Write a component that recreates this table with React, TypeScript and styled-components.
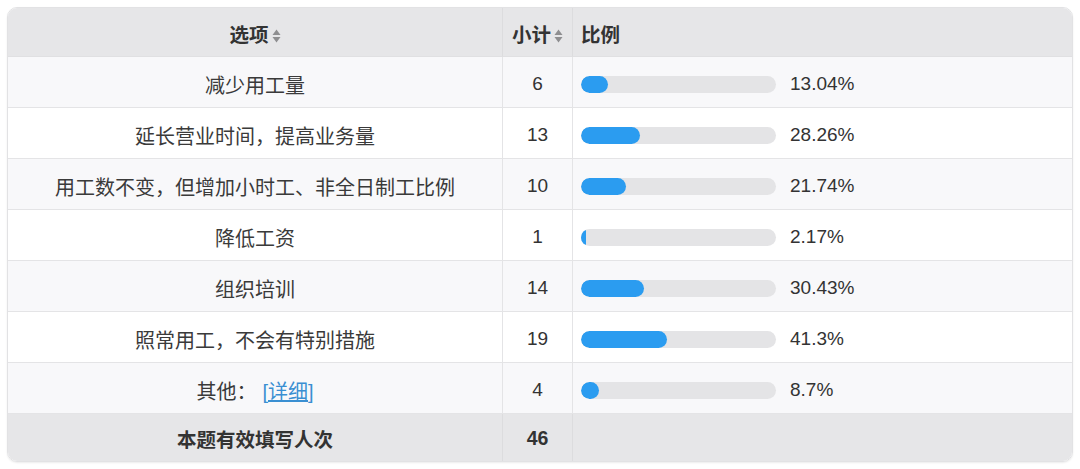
import styled, { createGlobalStyle } from "styled-components";

const GlobalStyle = createGlobalStyle`
  html, body {
    margin: 0;
    padding: 0;
    background: #ffffff;
  }
  body {
    font-family: "Liberation Sans", "Noto Sans CJK SC", sans-serif;
    color: #333333;
  }
`;

const Page = styled.div`
  width: 1080px;
  height: 469px;
  padding: 7px 7px 0 7px;
  box-sizing: border-box;
`;

const Table = styled.table`
  width: 1066px;
  border-collapse: separate;
  border-spacing: 0;
  border: 1px solid #e2e2e4;
  border-radius: 10px;
  overflow: hidden;
  box-shadow: 0 1px 2px rgba(0, 0, 0, 0.08);
  font-size: 19px;
  table-layout: fixed;
`;

const HeadRow = styled.tr`
  background: #e6e6e8;
  height: 49px;
`;

const HeadCell = styled.th<{ $align?: string }>`
  font-weight: bold;
  font-size: 19.5px;
  text-align: ${(p) => p.$align || "center"};
  padding: 2px 8px 0;
  color: #333333;
  border-right: 1px solid #dcdcde;
  border-bottom: 1px solid #e0e0e2;
  &:last-child {
    border-right: none;
  }
`;

const Row = styled.tr<{ $odd: boolean }>`
  background: ${(p) => (p.$odd ? "#f8f8fa" : "#ffffff")};
  height: 51px;
`;

const Cell = styled.td<{ $align?: string }>`
  text-align: ${(p) => p.$align || "center"};
  padding: 4px 8px 0;
  border-right: 1px solid #e4e4e6;
  border-bottom: 1px solid #e4e4e6;
  &:last-child {
    border-right: none;
  }
`;

const Label = styled.span`
  font-size: 20px;
  color: #3a3a3a;
`;

const FootRow = styled.tr`
  background: #e6e6e8;
  height: 47px;
`;

const FootCell = styled.td`
  text-align: center;
  font-weight: bold;
  font-size: 19.5px;
  padding-top: 2px;
  border-right: 1px solid #dcdcde;
  &:last-child {
    border-right: none;
  }
`;

const SortIcon = styled.svg`
  margin-left: 3px;
  vertical-align: -1px;
`;

const Ratio = styled.div`
  display: flex;
  align-items: center;
  gap: 14px;
`;

const Track = styled.div`
  width: 195px;
  height: 17px;
  border-radius: 9px;
  background: #e4e4e6;
  overflow: hidden;
`;

const Fill = styled.div`
  height: 100%;
  min-width: 3px;
  border-radius: 9px;
  background: #2b9cf0;
`;

const Detail = styled.a`
  color: #3a8fd2;
  text-decoration: underline;
  margin-left: 6px;
`;

function Sort() {
  return (
    <SortIcon width="9" height="14" viewBox="0 0 9 14">
      <path d="M4.5 0.5 L8.5 6 H0.5 Z" fill="#8e8e90" />
      <path d="M4.5 13.5 L8.5 8 H0.5 Z" fill="#8e8e90" />
    </SortIcon>
  );
}

const rows = [
  { label: "减少用工量", count: 6, pct: 13.04 },
  { label: "延长营业时间，提高业务量", count: 13, pct: 28.26 },
  { label: "用工数不变，但增加小时工、非全日制工比例", count: 10, pct: 21.74 },
  { label: "降低工资", count: 1, pct: 2.17 },
  { label: "组织培训", count: 14, pct: 30.43 },
  { label: "照常用工，不会有特别措施", count: 19, pct: 41.3 },
  { label: "其他：", count: 4, pct: 8.7, detail: true },
];

export default function App() {
  return (
    <>
      <GlobalStyle />
      <Page>
        <Table>
          <colgroup>
            <col style={{ width: 495 }} />
            <col style={{ width: 70 }} />
            <col />
          </colgroup>
          <thead>
            <HeadRow>
              <HeadCell>
                选项
                <Sort />
              </HeadCell>
              <HeadCell>
                小计
                <Sort />
              </HeadCell>
              <HeadCell $align="left">比例</HeadCell>
            </HeadRow>
          </thead>
          <tbody>
            {rows.map((r, i) => (
              <Row key={r.label} $odd={i % 2 === 0}>
                <Cell>
                  <Label>
                    {r.label}
                    {r.detail && <Detail href="#">[详细]</Detail>}
                  </Label>
                </Cell>
                <Cell>{r.count}</Cell>
                <Cell $align="left">
                  <Ratio>
                    <Track>
                      <Fill style={{ width: `${Math.min(100, r.pct * 1.07)}%` }} />
                    </Track>
                    <span>{r.pct}%</span>
                  </Ratio>
                </Cell>
              </Row>
            ))}
            <FootRow>
              <FootCell>本题有效填写人次</FootCell>
              <FootCell>46</FootCell>
              <FootCell />
            </FootRow>
          </tbody>
        </Table>
      </Page>
    </>
  );
}
